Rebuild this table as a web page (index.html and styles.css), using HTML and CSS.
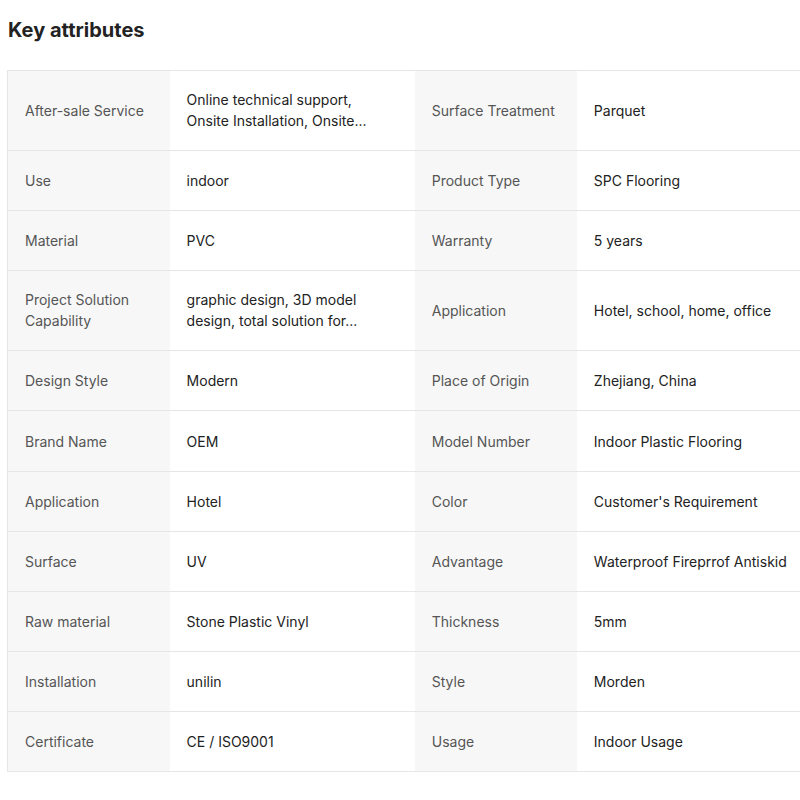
FILE: index.html
```html
<!DOCTYPE html>
<html lang="en">
<head>
<meta charset="utf-8">
<title>Key attributes</title>
<link rel="stylesheet" href="styles.css">
</head>
<body>
<div class="page">
  <h2 class="title">Key attributes</h2>
  <table class="attrs">
    <colgroup>
      <col class="c-label"><col class="c-value"><col class="c-label"><col class="c-value">
    </colgroup>
    <tbody>
      <tr class="tall">
        <td class="label">After-sale Service</td>
        <td class="value">Online technical support,<br>Onsite Installation, Onsite...</td>
        <td class="label">Surface Treatment</td>
        <td class="value">Parquet</td>
      </tr>
      <tr>
        <td class="label">Use</td><td class="value">indoor</td>
        <td class="label">Product Type</td><td class="value">SPC Flooring</td>
      </tr>
      <tr>
        <td class="label">Material</td><td class="value">PVC</td>
        <td class="label">Warranty</td><td class="value">5 years</td>
      </tr>
      <tr class="tall">
        <td class="label">Project Solution Capability</td>
        <td class="value">graphic design, 3D model<br>design, total solution for...</td>
        <td class="label">Application</td><td class="value">Hotel, school, home, office</td>
      </tr>
      <tr>
        <td class="label">Design Style</td><td class="value">Modern</td>
        <td class="label">Place of Origin</td><td class="value">Zhejiang, China</td>
      </tr>
      <tr class="plus">
        <td class="label">Brand Name</td><td class="value">OEM</td>
        <td class="label">Model Number</td><td class="value">Indoor Plastic Flooring</td>
      </tr>
      <tr>
        <td class="label">Application</td><td class="value">Hotel</td>
        <td class="label">Color</td><td class="value">Customer's Requirement</td>
      </tr>
      <tr>
        <td class="label">Surface</td><td class="value">UV</td>
        <td class="label">Advantage</td><td class="value">Waterproof Fireprrof Antiskid</td>
      </tr>
      <tr>
        <td class="label">Raw material</td><td class="value">Stone Plastic Vinyl</td>
        <td class="label">Thickness</td><td class="value">5mm</td>
      </tr>
      <tr>
        <td class="label">Installation</td><td class="value">unilin</td>
        <td class="label">Style</td><td class="value">Morden</td>
      </tr>
      <tr>
        <td class="label">Certificate</td><td class="value">CE / ISO9001</td>
        <td class="label">Usage</td><td class="value">Indoor Usage</td>
      </tr>
    </tbody>
  </table>
</div>
</body>
</html>
```
FILE: styles.css
```css
html, body {
  margin: 0;
  padding: 0;
  overflow: hidden;
  background: #fff;
}
body {
  font-family: Inter, "Noto Sans", "Liberation Sans", sans-serif;
  color: #222;
}
.page {
  padding: 0 0 0 7px;
  width: 830px;
}
.title {
  margin: 0;
  padding: 16px 0 0 1px;
  height: 70px;
  box-sizing: border-box;
  font-size: 20px;
  font-weight: 700;
  color: #222;
  line-height: 28px;
}
.attrs {
  border-collapse: collapse;
  table-layout: fixed;
  width: 815px;
  border-top: 1px solid #e6e6e6;
  border-left: 1px solid #e6e6e6;
}
.c-label { width: 162px; }
.c-value { width: 245px; }
.attrs td {
  padding: 19px 17px;
  font-size: 14px;
  line-height: 21px;
  vertical-align: middle;
  border-bottom: 1px solid #e6e6e6;
}
.attrs .tall td {
  padding-top: 18px;
  padding-bottom: 19px;
}
.attrs .plus td {
  padding-top: 20px;
}
.label {
  background: #f7f7f7;
  color: #555;
}
.value {
  background: #fff;
  color: #222;
}
```
